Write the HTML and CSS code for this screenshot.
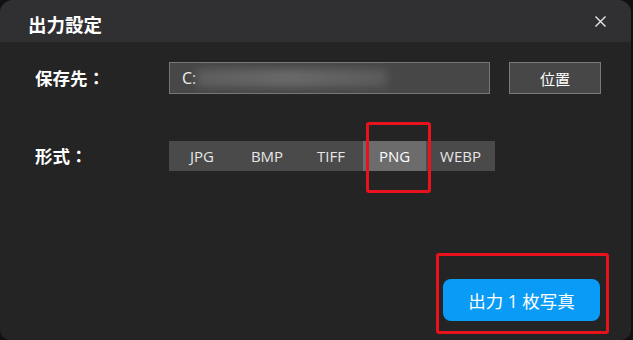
FILE: index.html
```html
<!DOCTYPE html>
<html lang="ja">
<head>
    <meta charset="UTF-8">
    <title>出力設定</title>
    <link rel="stylesheet" href="styles.css">
</head>
<body>
    <div class="dialog">
        <div class="titlebar">
            <span class="title">出力設定</span>
            <span class="close">
                <svg width="11" height="11" viewBox="0 0 11 11">
                    <path d="M0.5 0.5 L10.5 10.5 M10.5 0.5 L0.5 10.5" stroke="#e8e8e8" stroke-width="1.4" fill="none"/>
                </svg>
            </span>
        </div>
        <div class="content">
            <div class="row path-row">
                <span class="label">保存先：</span>
                <div class="path-input">
                    <span class="drive">C:</span>
                    <span class="blurred"></span>
                </div>
                <button class="btn-location">位置</button>
            </div>
            <div class="row format-row">
                <span class="label">形式：</span>
                <div class="formats">
                    <span class="fmt">JPG</span>
                    <span class="fmt">BMP</span>
                    <span class="fmt">TIFF</span>
                    <span class="fmt active">PNG<span class="mark mark-png"></span></span>
                    <span class="fmt">WEBP</span>
                </div>
            </div>
            <div class="footer">
                <div class="export-wrap">
                    <span class="mark mark-export"></span>
                    <button class="btn-export">出力 1 枚写真</button>
                </div>
            </div>
        </div>
    </div>
</body>
</html>
```

FILE: styles.css
```css
body {
    margin: 0;
    background-color: #111;
    font-family: "Noto Sans CJK JP", "Noto Sans", sans-serif;
    width: 633px;
    height: 340px;
    overflow: hidden;
}

.dialog {
    width: 631px;
    height: 340px;
    background-color: #242424;
    border-radius: 13px 13px 10px 10px;
    overflow: hidden;
    display: flex;
    flex-direction: column;
}

.titlebar {
    height: 42px;
    flex-shrink: 0;
    background-color: #303033;
    display: flex;
    align-items: center;
    justify-content: space-between;
    padding: 0 25px 0 28px;
}

.title {
    color: #fff;
    font-size: 18.5px;
    font-weight: bold;
    line-height: 1;
    margin-top: 6px;
}

.close {
    display: flex;
    margin-top: 0;
}

.content {
    flex: 1;
    display: flex;
    flex-direction: column;
}

.row {
    display: flex;
    align-items: center;
}

.path-row {
    margin-top: 20px;
    height: 32px;
}

.label {
    width: 134px;
    padding-left: 35px;
    color: #fff;
    font-size: 17.5px;
    font-weight: bold;
    line-height: 1;
}

.path-input {
    width: 319px;
    height: 30px;
    border: 1px solid #777;
    background-color: #474747;
    display: flex;
    align-items: center;
    overflow: hidden;
}

.drive {
    color: #f0f0f0;
    font-family: "Open Sans", "Noto Sans CJK JP", sans-serif;
    font-size: 16px;
    padding-left: 12px;
    padding-right: 1px;
}

.blurred {
    width: 190px;
    height: 18px;
    background: linear-gradient(90deg, #5e5e5e, #6a6a6a 50%, #5a5a5a);
    filter: blur(4px);
}

.btn-location {
    margin-left: 19px;
    width: 92px;
    height: 32px;
    border: 1px solid #7a7a7a;
    background-color: #474747;
    color: #fff;
    font-family: inherit;
    font-size: 15px;
    padding: 0;
}

.format-row {
    margin-top: 47px;
    height: 30px;
}

.formats {
    display: flex;
    height: 30px;
    background-color: #4a4a4a;
}

.fmt {
    position: relative;
    display: flex;
    align-items: center;
    justify-content: center;
    color: #e6e6e6;
    font-family: "Open Sans", "Noto Sans", sans-serif;
    font-size: 15px;
    height: 30px;
}

.fmt:nth-child(1) { width: 66px; }
.fmt:nth-child(2) { width: 64px; }
.fmt:nth-child(3) { width: 64px; }
.fmt:nth-child(4) { width: 63px; }
.fmt:nth-child(5) { width: 69px; }

.fmt.active {
    background-color: #6c6c6c;
    color: #fff;
}

.mark {
    position: absolute;
    border: 3px solid #e8121c;
    border-radius: 3px;
    pointer-events: none;
}

.mark-png {
    left: 3px;
    top: -19px;
    width: 59px;
    height: 65px;
}

.footer {
    flex: 1;
    display: flex;
    justify-content: flex-end;
    align-items: flex-end;
    padding: 0 22px 6px 0;
}

.export-wrap {
    position: relative;
    padding: 26px 9px 13px 7px;
}

.mark-export {
    left: 0;
    top: 0;
    right: 0;
    bottom: 0;
}

.btn-export {
    display: block;
    width: 157px;
    height: 42px;
    border: none;
    border-radius: 8px;
    background-color: #0a9bf6;
    color: #fff;
    font-family: "Open Sans", "Noto Sans CJK JP", sans-serif;
    font-size: 17.5px;
    padding: 0;
}
```
